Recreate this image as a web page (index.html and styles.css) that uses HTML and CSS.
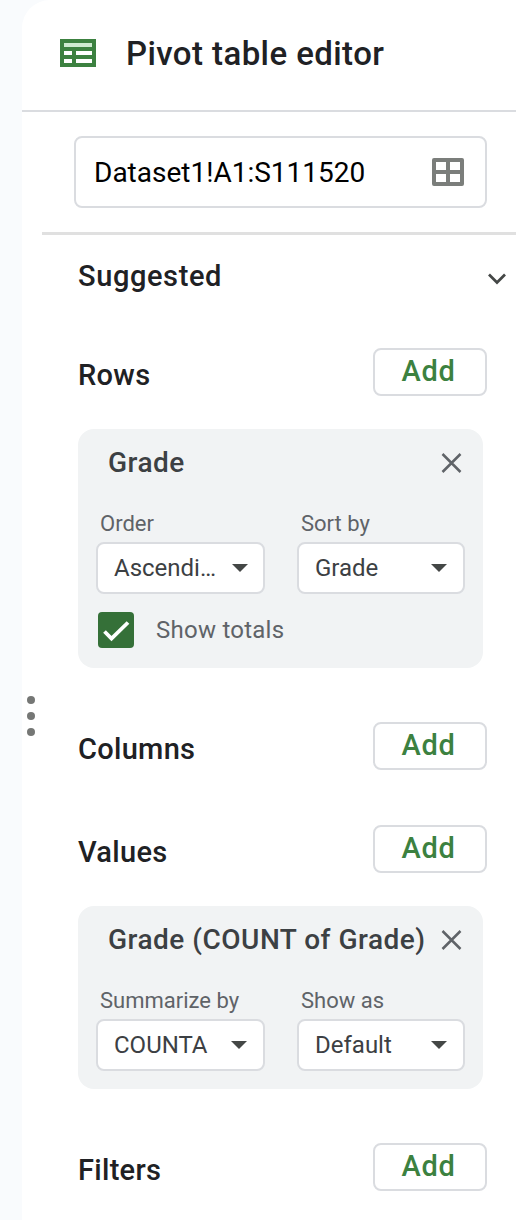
FILE: index.html
```html
<!DOCTYPE html>
<html lang="en">
<head>
<meta charset="utf-8">
<title>Pivot table editor</title>
<link rel="stylesheet" href="styles.css">
</head>
<body>
<main class="panel">
  <header class="header">
    <svg class="logo" width="36" height="28" viewBox="0 0 36 28"><path fill="#3c8140" d="M0 0h36v28H0z"/><path fill="#ceead0" d="M4 4h28v4H4z"/><path fill="#fff" d="M4 12h8v4H4zM16 12h16v4H16zM4 20h8v4H4zM16 20h16v4H16z"/></svg>
    <h1 class="title">Pivot table editor</h1>
  </header>
  <div class="grip"><i></i><i></i><i></i></div>
  <div class="range">
    <span class="range-text">Dataset1!A1:S111520</span>
    <svg width="32" height="28" viewBox="0 0 32 28"><path fill="#7b7e7b" fill-rule="evenodd" d="M2 0h28a2 2 0 0 1 2 2v24a2 2 0 0 1-2 2H2a2 2 0 0 1-2-2V2a2 2 0 0 1 2-2zM4 4v8h10V4zM18 4v8h10V4zM4 16v8h10v-8zM18 16v8h10v-8z"/></svg>
  </div>
  <section class="suggested">
    <h2 class="heading suggested-text">Suggested</h2>
    <svg class="chevron" width="20" height="14" viewBox="0 0 20 14"><path d="M2 2.500l8 8 8-8" fill="none" stroke="#444746" stroke-width="2.700"/></svg>
  </section>
  <section class="row">
    <h2 class="heading">Rows</h2><button class="add">Add</button>
  </section>
  <article class="card">
    <div class="card-head"><h3 class="card-title">Grade</h3>
      <svg class="close" width="22" height="22" viewBox="0 0 22 22"><path d="M1.500 2l18 18M19.500 2l-18 18" stroke="#5f6368" stroke-width="2.500"/></svg></div>
    <div class="fields">
      <div class="field"><span class="label">Order</span><div class="select ascending"><span>Ascendi…</span><svg width="16" height="8" viewBox="0 0 16 8"><path fill="#444746" d="M0 0h16L8 8z"/></svg></div></div>
      <div class="field"><span class="label">Sort by</span><div class="select"><span>Grade</span><svg width="16" height="8" viewBox="0 0 16 8"><path fill="#444746" d="M0 0h16L8 8z"/></svg></div></div>
    </div>
    <div class="check">
      <svg width="36" height="36" viewBox="0 0 36 36"><rect width="36" height="36" rx="4" fill="#357038"/><path d="M6.500 19.500l7 7L30 10.500" fill="none" stroke="#fff" stroke-width="3.800"/></svg>
      <span class="check-text">Show totals</span>
    </div>
  </article>
  <section class="row columns">
    <h2 class="heading">Columns</h2><button class="add">Add</button>
  </section>
  <section class="row">
    <h2 class="heading">Values</h2><button class="add">Add</button>
  </section>
  <article class="card">
    <div class="card-head"><h3 class="card-title">Grade (COUNT of Grade)</h3>
      <svg class="close" width="22" height="22" viewBox="0 0 22 22"><path d="M1.500 2l18 18M19.500 2l-18 18" stroke="#5f6368" stroke-width="2.500"/></svg></div>
    <div class="fields">
      <div class="field"><span class="label">Summarize by</span><div class="select"><span>COUNTA</span><svg width="16" height="8" viewBox="0 0 16 8"><path fill="#444746" d="M0 0h16L8 8z"/></svg></div></div>
      <div class="field"><span class="label">Show as</span><div class="select"><span>Default</span><svg width="16" height="8" viewBox="0 0 16 8"><path fill="#444746" d="M0 0h16L8 8z"/></svg></div></div>
    </div>
  </article>
  <section class="row filters">
    <h2 class="heading">Filters</h2><button class="add">Add</button>
  </section>
</main>
</body>
</html>
```
FILE: styles.css
```css
* { box-sizing: border-box; }
body { margin: 0; background: #f9fbfd; font-family: Roboto, "Liberation Sans", sans-serif; overflow: hidden; }
h1, h2, h3 { margin: 0; font-weight: 500; white-space: nowrap; }
svg { display: block; flex: none; }
.panel { position: relative; height: 1220px; margin-left: 22px; background: #fff; border-top-left-radius: 28px; }
.header { display: flex; align-items: center; gap: 30px; height: 112px; padding: 0 0 2px 38px; border-bottom: 2px solid #dadce0; }
.logo { margin-bottom: 2px; }
.title { margin-bottom: 1px; font-size: 33px; line-height: 40px; color: #202124; letter-spacing: .42px; }
.grip { position: absolute; left: 5px; top: 696px; display: flex; flex-direction: column; gap: 8px; }
.grip i { width: 8px; height: 8px; border-radius: 50%; background: #757775; }
.range { display: flex; align-items: center; justify-content: space-between; height: 72px; margin: 24px 29px 24px 52px; padding: 0 21px 0 18px; border: 2px solid #dadce0; border-radius: 8px; }
.range-text { padding-top: 2px; font-size: 28px; line-height: 36px; color: #000; }
.suggested { display: flex; justify-content: space-between; height: 116px; margin-left: 20px; padding: 23px 9px 0 36px; border-top: 3px solid #e0e0e0; }
.heading { font-size: 29px; line-height: 36px; color: #202124; letter-spacing: .3px; }
.suggested-text { letter-spacing: .6px; }
.chevron { margin-top: 14px; }
.row { display: flex; align-items: center; justify-content: space-between; height: 48px; margin: 0 29px 33px 56px; }
.row .heading { padding-top: 6px; }
.add { width: 114px; height: 48px; padding: 0 3px 2px 0; border: 2px solid #dadce0; border-radius: 8px; background: #fff; color: #3c8140; font: 500 29px/42px Roboto, sans-serif; letter-spacing: .7px; }
.card { width: 405px; margin-left: 56px; padding: 16px 18px 18px; border-radius: 16px; background: #f1f3f4; }
.card-head { display: flex; align-items: center; justify-content: space-between; height: 36px; padding: 0 2px 0 12px; }
.card-title { font-size: 28px; line-height: 36px; color: #3c4043; letter-spacing: .5px; }
.fields { display: flex; gap: 32px; margin-top: 29px; }
.field { width: 169px; }
.field + .field { width: 168px; }
.label { display: block; height: 32px; padding-left: 4px; font-size: 22px; line-height: 28px; color: #5f6368; white-space: nowrap; }
.select { display: flex; align-items: center; justify-content: space-between; height: 52px; padding: 0 16px; border: 2px solid #dadce0; border-radius: 8px; background: #fff; font-size: 24px; line-height: 32px; color: #3c4043; }
.ascending { padding-right: 15px; }
.check { display: flex; align-items: center; gap: 22px; height: 36px; margin: 18px 0 2px 2px; }
.check-text { font-size: 24px; line-height: 32px; letter-spacing: .25px; color: #5f6368; }
.columns { margin-top: 54px; margin-bottom: 55px; }
.filters { margin-top: 54px; }
```
